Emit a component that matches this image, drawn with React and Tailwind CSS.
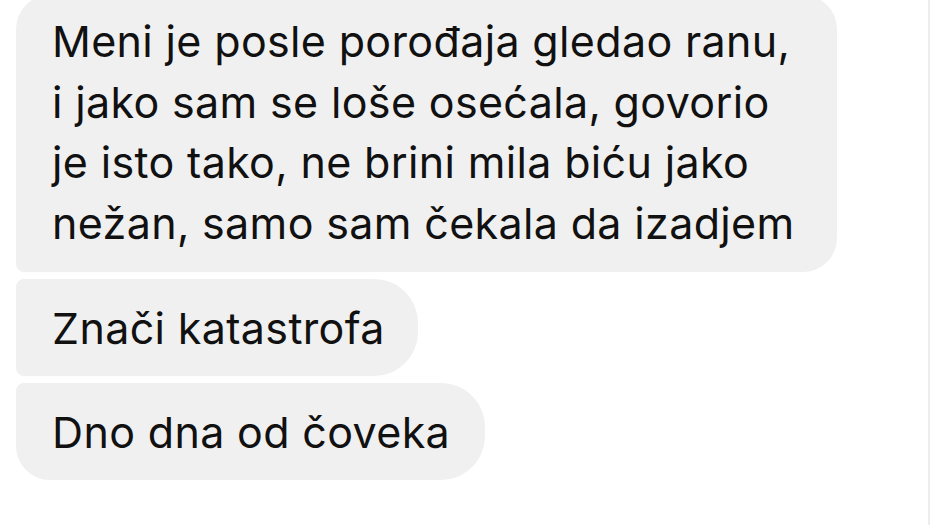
export default function App() {
  const font = { fontFamily: "Inter, 'Liberation Sans', sans-serif" };
  return (
    <div className="flex h-[525px] w-[930px] overflow-hidden bg-white border-r-2 border-[#ededed]" style={font}>
      <div className="flex flex-col items-start gap-[7px] pl-4 text-[43px] leading-[60.5px] tracking-[0.35px] text-[#111]">
        <div className="-mt-[5px] rounded-[34px] rounded-bl-[8px] bg-[#f0f0f0] pl-9 pr-[42px] pt-[16px] pb-[19px]">
          Meni je posle porođaja gledao ranu,
          <br />i jako sam se loše osećala, govorio
          <br />je isto tako, ne brini mila biću jako
          <br />nežan, samo sam čekala da izadjem
        </div>
        <div className="rounded-l-[8px] rounded-r-[44px] bg-[#f0f0f0] pl-9 pr-[33px] pt-[19px] pb-[17px]">
          Znači katastrofa
        </div>
        <div className="rounded-l-[8px] rounded-bl-[34px] rounded-r-[44px] bg-[#f0f0f0] pl-9 pr-[35px] pt-[19px] pb-[18px]">
          Dno dna od čoveka
        </div>
      </div>
    </div>
  );
}
